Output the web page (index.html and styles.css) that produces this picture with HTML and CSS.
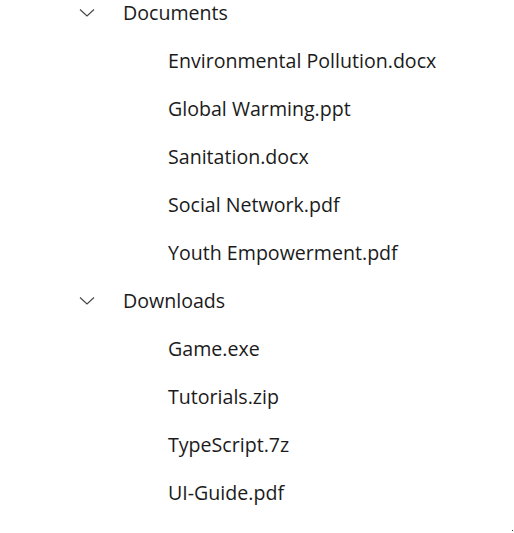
FILE: index.html
```html
<!DOCTYPE html>
<html>
<head>
<meta charset="utf-8">
<link rel="stylesheet" href="styles.css">
</head>
<body>
<div class="tree">
  <div class="node">
    <div class="row parent">
      <svg class="chev" width="16" height="10" viewBox="0 0 16 10"><path d="M1 1.5 L8 8 L15 1.5" fill="none" stroke="#444" stroke-width="1.1"/></svg>
      <span class="label">Documents</span>
    </div>
    <div class="row child"><span class="label">Environmental Pollution.docx</span></div>
    <div class="row child"><span class="label">Global Warming.ppt</span></div>
    <div class="row child"><span class="label">Sanitation.docx</span></div>
    <div class="row child"><span class="label">Social Network.pdf</span></div>
    <div class="row child"><span class="label">Youth Empowerment.pdf</span></div>
  </div>
  <div class="node">
    <div class="row parent">
      <svg class="chev" width="16" height="10" viewBox="0 0 16 10"><path d="M1 1.5 L8 8 L15 1.5" fill="none" stroke="#444" stroke-width="1.1"/></svg>
      <span class="label">Downloads</span>
    </div>
    <div class="row child"><span class="label">Game.exe</span></div>
    <div class="row child"><span class="label">Tutorials.zip</span></div>
    <div class="row child"><span class="label">TypeScript.7z</span></div>
    <div class="row child"><span class="label">UI-Guide.pdf</span></div>
  </div>
</div>
<div class="grip"></div>
</body>
</html>
```
FILE: styles.css
```css
html, body {
  margin: 0;
  padding: 0;
  background: #ffffff;
  overflow: hidden;
}
body {
  width: 514px;
  height: 533px;
  position: relative;
  font-family: "Segoe UI", "Open Sans", "Noto Sans", sans-serif;
  color: #1b1b1b;
}
.tree {
  margin-top: -12px;
}
.row {
  height: 48px;
  display: flex;
  align-items: center;
  font-size: 19.6px;
}
.parent {
  padding-left: 79px;
}
.chev {
  display: block;
  margin-top: 1px;
  margin-right: 28px;
}
.child {
  padding-left: 168px;
}
.label {
  white-space: nowrap;
}
.grip {
  position: absolute;
  right: 1px;
  bottom: 2px;
  width: 1px;
  height: 1px;
  background: #333;
}
```
